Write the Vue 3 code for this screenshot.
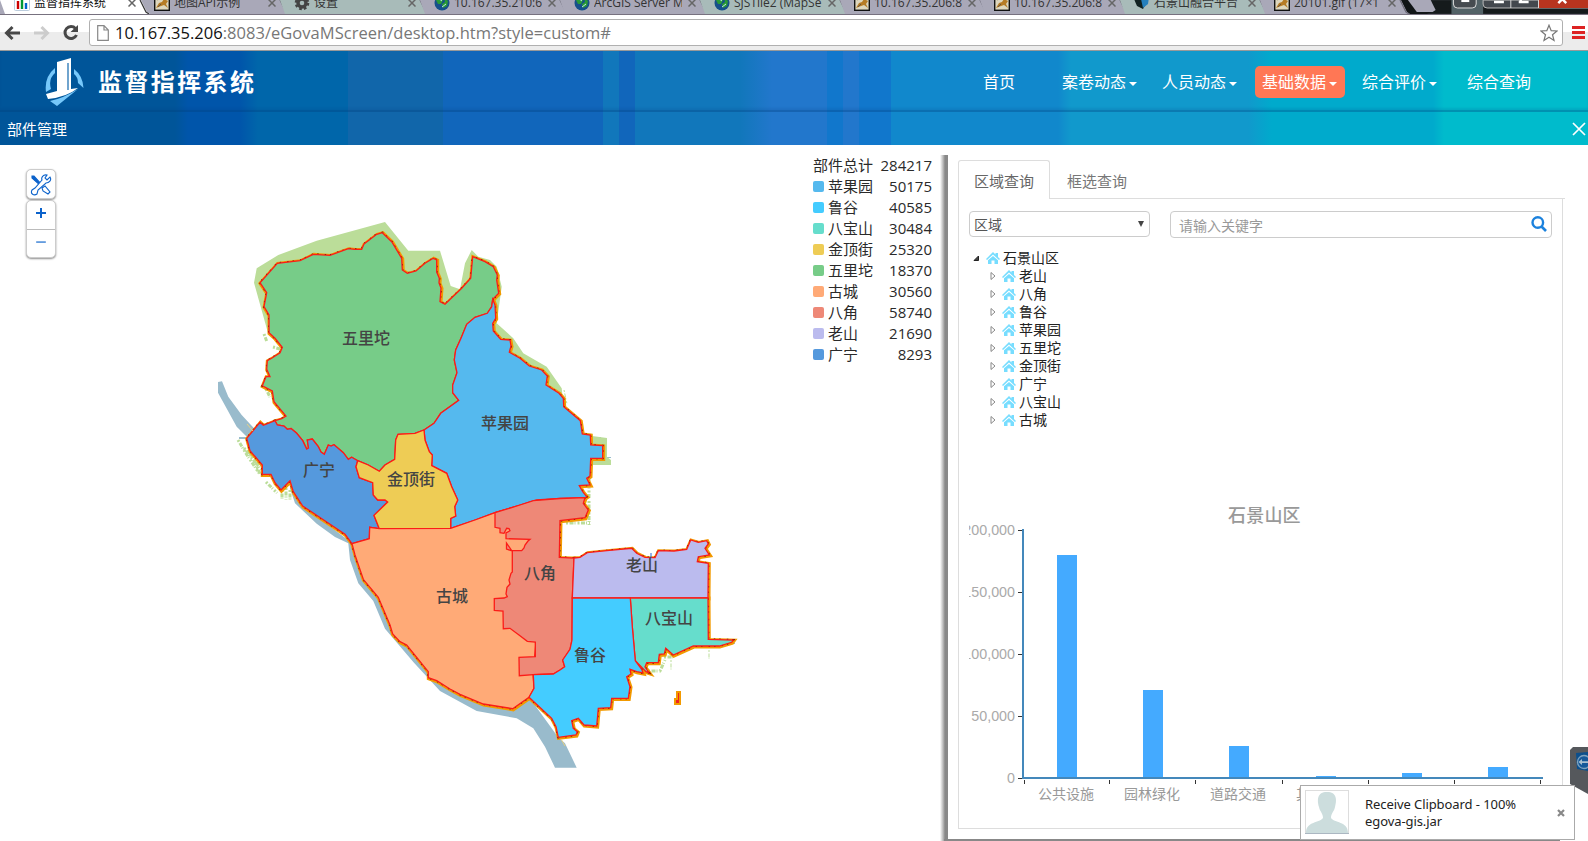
<script setup>
const tabs = [
  { title: '监督指挥系统', icon: 'chart', active: true },
  { title: '地图API示例', icon: 'map' },
  { title: '设置', icon: 'gear' },
  { title: '10.167.35.210:6', icon: 'globe' },
  { title: 'ArcGIS Server M', icon: 'globe' },
  { title: 'SJSTile2 (MapSe', icon: 'globe' },
  { title: '10.167.35.206:8', icon: 'map' },
  { title: '10.167.35.206:8', icon: 'map' },
  { title: '石景山融合平台', icon: 'cube' },
  { title: '20101.gif (17×1', icon: 'map' },
]

const nav = [
  { text: '首页', cls: 'n-home' },
  { text: '案卷动态', caret: true, cls: 'n-case' },
  { text: '人员动态', caret: true, cls: 'n-staff' },
  { text: '基础数据', caret: true, cls: 'n-base active' },
  { text: '综合评价', caret: true, cls: 'n-eval' },
  { text: '综合查询', cls: 'n-query' },
]

const legend = [
  { name: '苹果园', value: 50175, color: '#55b9ee' },
  { name: '鲁谷', value: 40585, color: '#44ccff' },
  { name: '八宝山', value: 30484, color: '#66ddcc' },
  { name: '金顶街', value: 25320, color: '#eecc55' },
  { name: '五里坨', value: 18370, color: '#77cc88' },
  { name: '古城', value: 30560, color: '#ffaa77' },
  { name: '八角', value: 58740, color: '#ee8877' },
  { name: '老山', value: 21690, color: '#bbbbee' },
  { name: '广宁', value: 8293, color: '#5599dd' },
]

const bajiaoWest = '519.3,675.7 519,657.3 535.3,656.7 535.3,642 527.3,641.3 519,635 510,628.3 503.3,628.7 503,611 494.3,610.3 494.3,598.7 504,598 507.3,596.7 506,594 507,587.3 510,584 509,580 511,573.3 512.3,572 512.3,550.7 521.7,550.7 524,548 525,545 528,541 530,539.3 506,538.7 506,533 510,530.7 509,528.5 506.7,528.3 504,533.3 500,532.7 500,528.3 495,527.3 495,512.7'
const bajiaoEast = '572.3,598 572,640 570,649.3 562.7,660 564.7,666.7 560,670 553.3,674 533.3,674.7'

const regions = [
  { name: '五里坨', color: '#77cc88', x: 366, y: 338, points: '260,282.7 266.7,292.7 264,306.7 269,315 269,332.7 275,338.3 282.3,347.3 280,352.7 272,358 267.3,360.7 266.7,369.3 270,376.7 266,376.7 262.3,385.7 272.3,391 274,401.7 286,416 281.7,418.7 275,420.7 277.3,425 284,426 287.3,429.3 291,428.5 296.7,433.3 302.7,440.7 306.7,449 308.5,448 307.3,440 312.3,439 318.3,446.7 321,452 324.3,454.3 328.3,445 331,446 334,444.7 343.3,452.7 348.3,459.3 351.7,457.3 357.7,460.7 368.3,465 379.3,471.3 385,465 394.7,459.3 395.7,440 398,434.3 415,433.3 424,430 434,423.3 440.7,413.3 458.7,400.3 452.7,392.7 452.7,385 457,372.7 454.3,360 455.7,350 461,338.3 466.7,324.3 475,317.3 487.3,313.3 491.7,306.7 492.7,299.3 498.7,293.3 496.7,280 497.3,275 493.3,266.7 485,261.7 472.7,256.7 470.7,278.3 461.7,288.3 445,304.3 440,301.7 441,288 439,283 439.3,278.3 436.7,272 436.7,260 433.3,258.3 425,263.3 416,271 407.3,273.3 402.3,270 401.7,258.3 391.7,241.7 382.3,232.7 376.7,234.3 364,244 361.7,249.3 355,249.3 348.3,248.7 330,255.3 313.3,254.3 300,260.7 277.3,263.3' },
  { name: '苹果园', color: '#55b9ee', x: 505, y: 423.5, points: '492.7,299.3 495,305 495.7,318.3 492.7,323.3 493.3,331 500.7,339.3 510,340 511,346 509.3,352.3 520,358.3 529.3,366 541.7,370 547.3,376 546,385 559,393.3 563.3,398.3 563.7,406.7 580.3,420.7 582.3,434 590.3,435 590.7,445 602.7,445.7 602.7,458.3 590.7,458.3 590,476 586.7,478.3 590,485 579.3,485.7 582.7,491.7 586.7,496.7 585,497.7 560,498.5 536.7,500 520,505 495,512.7 475,520 450.7,528.3 450.7,518.3 455.7,516 454.7,506.7 457.7,500 451.7,486.7 446.7,473.3 431.7,465.7 432.3,455 429.3,451.7 425,440 424,430 434,423.3 440.7,413.3 458.7,400.3 452.7,392.7 452.7,385 457,372.7 454.3,360 455.7,350 461,338.3 466.7,324.3 475,317.3 487.3,313.3 491.7,306.7' },
  { name: '广宁', color: '#5599dd', x: 319, y: 470, points: '275,420.7 263.3,425.3 260,422.3 246.7,438.3 250,450.7 262.3,465 262.3,474.3 271,474.3 275,482.7 281,490 290,480.7 293.3,491.7 302.7,506 345,534.3 352,543.7 369.3,538.7 369.7,527.3 379.3,528.7 374,515.3 387.7,502 385,500 377.7,500 373.3,495 372.7,482.7 359.3,477.7 356,466.7 357.7,460.7 351.7,457.3 348.3,459.3 343.3,452.7 334,444.7 331,446 328.3,445 324.3,454.3 321,452 318.3,446.7 312.3,439 307.3,440 308.5,448 306.7,449 302.7,440.7 296.7,433.3 291,428.5 287.3,429.3 284,426 277.3,425' },
  { name: '金顶街', color: '#eecc55', x: 411, y: 479.5, points: '357.7,460.7 368.3,465 379.3,471.3 385,465 394.7,459.3 395.7,440 398,434.3 415,433.3 424,430 425,440 429.3,451.7 432.3,455 431.7,465.7 446.7,473.3 451.7,486.7 457.7,500 454.7,506.7 455.7,516 450.7,518.3 450.7,528.3 379.3,528.7 374,515.3 387.7,502 385,500 377.7,500 373.3,495 372.7,482.7 359.3,477.7 356,466.7' },
  { name: '古城', color: '#ffaa77', x: 452, y: 596, points: `352,543.7 369.3,538.7 369.7,527.3 379.3,528.7 450.7,528.3 475,520 495,512.7 533,502 540,600 533,674 534,688.3 529,697.3 512.7,708.7 483.3,704 460,694.3 450,689 436.7,680.7 428.3,677.7 428.3,671.7 406.7,645 400,641.7 392.7,634 390,625 378.3,597.3 363.3,579.3 355,555` },
  { name: '八角', color: '#ee8877', x: 540, y: 573, points: `495,512.7 520,505 533.3,500.7 560,498.5 585,497.7 583.3,503.3 588.3,510 585,517.7 560,520.7 559.3,557.3 574,558 ${bajiaoEast} ${bajiaoWest}` },
  { name: '老山', color: '#bbbbee', x: 642, y: 565, points: '574,558 580,557.3 587.3,552.7 606.7,550.7 631.7,548.3 636.7,553.3 645,557.3 655,557.7 658.3,550.7 674,551 686.7,549.3 690.7,540 698.3,542.3 706.7,540.7 708.3,544 705,548.3 709.3,555 698.3,556.7 697.3,561.7 708.3,563.3 708,598 572.3,598' },
  { name: '八宝山', color: '#66ddcc', x: 669, y: 618, points: '630.3,598 708,598 708.3,639.3 733.3,640 731.7,642.3 719.3,646 693.3,646 673.3,655 665.7,648.3 664.3,654 659.3,654.3 658.3,662.7 646.7,662.7 645,667 649,672.7 646,671.7 635.3,660.7 632.3,626.7' },
  { name: '鲁谷', color: '#44ccff', x: 590, y: 655, points: '630.3,598 632.3,626.7 635.3,660.7 641.7,669.3 643,673 636.7,671.7 630,669.3 631,674 626.7,676.7 630,686.7 628.3,698.3 611.7,698.3 610.7,707.7 598.3,708.3 596.7,726 584,725 578.3,718.3 571.7,720.7 573.3,728.3 577.3,731.7 576,735 558.3,737.3 556,726.7 551.7,718.3 529,697.3 534,688.3 533.3,674.7 553.3,674 560,670 564.7,666.7 562.7,660 570,649.3 572,640 572.3,598' },
]

const tree = ['老山', '八角', '鲁谷', '苹果园', '五里坨', '金顶街', '广宁', '八宝山', '古城']

const yTicks = ['200,000', '150,000', '100,000', '50,000', '0']
const bars = [
  { label: '公共设施', h: 222 },
  { label: '园林绿化', h: 87 },
  { label: '道路交通', h: 31 },
  { label: '其他设施', h: 1 },
  { label: '', h: 4 },
  { label: '', h: 10 },
]
</script>

<template>
  <div class="screen">
    <div class="tabstrip">
      <div v-for="(t, i) in tabs" :key="i" class="tab" :class="{ on: t.active, odd: i % 3 === 2 }">
        <svg class="tab-shape" viewBox="0 0 150 14" preserveAspectRatio="none">
          <path d="M0 0H141L147 12L150 14H5Z" class="shape" />
          <path d="M140 0L146 12L149 14" class="edge" />
        </svg>
        <svg class="fav" viewBox="0 0 16 16">
          <g v-if="t.icon === 'chart'"><rect x=".5" y="0" width="15" height="15.5" rx="1" fill="#fff" stroke="#bcd" /><path d="M4 6v8" stroke="#c00" stroke-width="2.4" /><path d="M8 3v11" stroke="#093" stroke-width="2.4" /><path d="M12 8v6" stroke="#06c" stroke-width="2.4" /></g>
          <g v-else-if="t.icon === 'map'"><rect x=".7" y=".7" width="14.6" height="14.6" fill="#ddd6bd" stroke="#111" stroke-width="1.4" /><path d="M2 13L5 8L8 7L10 4L14 6L12 9L14 13L10 10L7 11Z" fill="#b57b25" /><path d="M3 5L6 3M4 12L7 9" stroke="#654" /></g>
          <g v-else-if="t.icon === 'gear'"><circle cx="8" cy="8" r="4" fill="none" stroke="#444" stroke-width="3.4" /><circle cx="8" cy="8" r="6" fill="none" stroke="#444" stroke-width="2.6" stroke-dasharray="2.6 2.1" /></g>
          <g v-else-if="t.icon === 'globe'"><circle cx="8" cy="8" r="7.5" fill="#15508a" /><path d="M2 5L7 2L9 5L7 9L4 9ZM10 3L14 6L13 11L9 13L8 9L11 7Z" fill="#299a35" /><path d="M4 3L8 6M8 12L12 9" stroke="#bfe6ea" /></g>
          <g v-else><path d="M0 4L8 0L14 5L9 14L3 11Z" fill="#122" /><path d="M7 4L15 2L14 9L9 13Z" fill="#2580bd" /></g>
        </svg>
        <span class="tab-title">{{ t.title }}</span>
        <svg class="tab-x" viewBox="0 0 8 8"><path d="M.5 .5L7.500 7.500M7.500 .5L.5 7.500" /></svg>
      </div>
      <svg class="caption" viewBox="0 0 190 14">
        <rect width="190" height="14" fill="#151a1c" />
        <path d="M0 0H22L31 12L27 14H0Z" fill="#101416" />
        <path d="M8 0H31L36 10L33 12H17Z" fill="#a9a8b8" />
        <rect x="52" y="0" width="32" height="14" fill="#6d8288" opacity=".7" />
        <rect x="54" y="-8" width="23" height="16" rx="4" fill="#464b50" stroke="#ddd" />
        <rect x="62" y="-2" width="8" height="4" fill="#fff" />
        <path d="M84 0V4Q84 8 88 8H190V0Z" fill="#43484e" stroke="#bbb" />
        <path d="M140 0H190V8H140Z" fill="#b8341f" /><path d="M112 0V8M140 0V8" stroke="#ddd" />
        <path d="M95 2H105M120 2H130M122 0V2" stroke="#fff" stroke-width="2.500" />
        <path d="M160 3L164 -1L168 3" fill="none" stroke="#fff" stroke-width="2.500" />
      </svg>
    </div>

    <div class="toolbar">
      <svg class="tools" viewBox="0 0 88 36">
        <g fill="none" stroke-width="3"><path d="M20 18H7M12.500 12L6.500 18L12.500 24" stroke="#484848" /><path d="M34 18H47M41.500 12L47.500 18L41.500 24" stroke="#ccc" /><path d="M75.500 13.500A6 6 0 1 0 76.500 20" stroke="#484848" /></g>
        <path d="M78 10V17H70.500Z" fill="#484848" />
      </svg>
      <div class="url">
        <svg class="page" viewBox="0 0 12 16"><path d="M.7 .7H7L11.300 5V15.300H.7Z M7 .7V5H11.300" fill="#fff" stroke="#888" stroke-width="1.200" /></svg>
        <span class="addr"><b>10.167.35.206</b>:8083/eGovaMScreen/desktop.htm?style=custom#</span>
        <svg class="star" viewBox="0 0 18 18"><path d="M9 1.200L11.200 6.700L17 7L12.500 10.700L14 16.500L9 13.200L4 16.500L5.500 10.700L1 7L6.800 6.700Z" fill="#fff" stroke="#777" stroke-width="1.200" /></svg>
      </div>
      <div class="burger"><i></i><i></i><i></i></div>
    </div>

    <header class="header">
      <div class="top">
        <svg class="logo" viewBox="0 0 40 48">
          <path d="M10 10Q-1 19 1 34L6 31Q3 21 10 15Z" fill="#77c8fa" />
          <path d="M29 11Q38 18 38.500 30L33 25Q33 19 29 16Z" fill="#77c8fa" />
          <path d="M12 4L26 0V31L33 30Q22 39 3 41L1 36L12 33Z" fill="#fff" />
          <path d="M23 5V32" stroke="#1168ad" stroke-width="1.200" /><path d="M33 31L12 48L5 43Q19 40 33 31Z" fill="#77c8fa" />
        </svg>
        <h1>监督指挥系统</h1>
        <nav>
          <a v-for="n in nav" :key="n.text" :class="n.cls">{{ n.text }}<i v-if="n.caret" class="caret"></i></a>
        </nav>
      </div>
      <div class="sub">
        <span>部件管理</span>
        <svg viewBox="0 0 14 14"><path d="M1 1L13 13M13 1L1 13" stroke="#fff" stroke-width="1.700" /></svg>
      </div>
    </header>

    <main class="body">
      <section class="map">
        <svg class="canvas" viewBox="0 145 940 696">
          <g fill="#99bbcc">
            <path d="M218 382L222 381.300L228.300 396.700L241.700 415L254 428.300L258 430L248 438L245 435L236.700 426.700L218 392.700ZM239 437H247V439H239Z" />
            <path d="M290 481L290 488.300L295 503.300L316.700 523.700L335 537L348.300 543.300L350 560L358.300 583.300L373.300 601L385 628.700L413.300 662L440 691L476.700 711L516.700 718.300L533.300 728.300L545 746.700L555 767.700H576.700L565 743.300L558 737L529 697L428 672L352 543L303 506Z" />
            <path d="M604 457h7v1h-7zM604 460h7v1h-7zM596 437h5v1h-5zM726 643h9v1h-9z" />
          </g>
          <path fill="#bbdd99" d="M268 333L254 282.700L256.700 268.300L278.300 255L316.700 240.700L385 222L408.300 250.700H440L450.700 286L460 289.300L465 263.300L471.700 250L478.300 256.700L490 260L496.700 266.700L501.700 286.700L496.700 323.300L513.300 338.300L523.300 353.300L546.700 366.700L561.700 388.300L563 400L500 400L350 350ZM592 436L607 438V457L611 460V465H593Z" />
          <g fill="none" stroke="#bbdd99" stroke-width="3" stroke-dasharray="2 1.500 4 1 1 2">
            <path d="M264 334L267 342M273 347L280 349M266 389L270 397M238 440L247 455L259 473M244 448L255 462L260 474M248 450L261 470M266 482L277 493M282 490V499M286 488V500M290 490V501" />
            <path d="M589 479V498M589 501V525M566 523H590M648 671H660L665 660M664 657H673" />
            <path d="M709 650V659M671 660V670M564 390L567 404" stroke-width="1" />
          </g>
          <g transform="translate(.5 .6)" fill="none" stroke="#f29a00" stroke-width="4">
            <polygon v-for="r in regions" :key="r.name" :points="r.points" />
          </g>
          <g fill="none" stroke="#501010" stroke-width="2" stroke-dasharray="1.500 6 1.500 4">
            <polygon v-for="r in regions" :key="r.name" :points="r.points" />
          </g>
          <g stroke="#fb1c18" stroke-width="1.300">
            <polygon v-for="r in regions" :key="r.name" :points="r.points" :fill="r.color" />
            <path d="M512 551L506.500 543V549L512 551" fill="#ee8877" />
          </g>
          <path d="M677 692H680V704H675V699H677Z" fill="#e22" stroke="#f29a00" stroke-width="2" />
          <path d="M651 553V558" stroke="#2266dd" />
          <path d="M247 424L253 431M561 739L565 746" stroke="#e7d080" />
          <text v-for="r in regions" :key="r.name" class="label" :x="r.x" :y="r.y + 5.800" text-anchor="middle">{{ r.name }}</text>
        </svg>

        <div class="controls">
          <div class="ctl">
            <svg viewBox="0 0 22 22" fill="#fff" stroke="#0b62cb" stroke-width="1.100"><path d="M2 2L4 2L12 11L11 12L2 4Z" fill="#0b62cb" /><path d="M12 14L15 12L20 18L18 20L13 17Z" /><path d="M2 16C0 20 4 22 7 20L8 16L16 9C19 9 22 6 20 3L17 6L15 4L17 1C13 0 11 4 12 6L5 14Z" /></svg>
          </div>
          <div class="zoomer">
            <svg viewBox="0 0 28 28"><path d="M9 12H19M14 7V17" stroke="#0b62cb" stroke-width="2" /></svg>
            <svg viewBox="0 0 28 28"><path d="M9 12.500H19" stroke="#0b62cb" stroke-width="1.200" /></svg>
          </div>
        </div>

        <div class="legend">
          <div class="lrow"><span>部件总计</span><em>284217</em></div>
          <div v-for="l in legend" :key="l.name" class="lrow">
            <i :style="{ background: l.color }"></i><span>{{ l.name }}</span><em>{{ l.value }}</em>
          </div>
        </div>
      </section>

      <aside class="panel">
        <div class="ptabs">
          <div class="ptab current">区域查询</div>
          <div class="ptab">框选查询</div>
        </div>
        <div class="pbody">
          <div class="filters">
            <div class="select"><span>区域</span><i></i></div>
            <div class="search">
              <span>请输入关键字</span>
              <svg viewBox="0 0 16 16"><circle cx="6.800" cy="6.500" r="5.300" fill="none" stroke="#1c82dd" stroke-width="2.400" /><path d="M10.500 10.500L15 15" stroke="#1c82dd" stroke-width="2.600" /></svg>
            </div>
          </div>
          <div class="tree">
            <div class="node root">
              <svg class="arrow" viewBox="0 0 7 7"><path d="M5.500 1.500V6H1Z" fill="#444" stroke="#222" /></svg>
              <svg class="house" viewBox="0 0 14 12"><path d="M7 0L9.500 2.400V1H12V5L14 7L13 8L7 2.600L1 8L0 7Z" /><path d="M7 4L12 8.300V12H8.500V8.500H5.500V12H2V8.300Z" /></svg>
              <span>石景山区</span>
            </div>
            <div v-for="t in tree" :key="t" class="node">
              <svg class="arrow" viewBox="0 0 7 8"><path d="M2 .5L6 4L2 7.500Z" fill="#fff" stroke="#888" /></svg>
              <svg class="house" viewBox="0 0 14 12"><path d="M7 0L9.500 2.400V1H12V5L14 7L13 8L7 2.600L1 8L0 7Z" /><path d="M7 4L12 8.300V12H8.500V8.500H5.500V12H2V8.300Z" /></svg>
              <span>{{ t }}</span>
            </div>
          </div>
          <div class="chart">
            <h2>石景山区</h2>
            <div class="plot">
              <div class="ylabels"><span v-for="y in yTicks" :key="y">{{ y }}<b></b></span></div>
              <div class="bars">
                <div v-for="(b, i) in bars" :key="i" class="slot"><i :style="{ height: b.h + 'px' }"></i></div>
              </div>
            </div>
            <div class="xlabels"><span v-for="(b, i) in bars" :key="i">{{ b.label }}</span></div>
          </div>
        </div>
      </aside>
    </main>

    <svg class="viewer" viewBox="0 0 18 47">
      <path d="M3 0H18V47L0 37V3Z" fill="#55585c" /><path d="M6 6L18 5V24L7 22Z" fill="#0c4f8c" /><circle cx="14" cy="15" r="6.500" fill="#16599a" stroke="#7fa3bf" stroke-width="1.300" /><path d="M8.500 15L12 12V14.200H18V16H12V18Z" fill="#a9c0d0" />
    </svg>
    <div class="toast">
      <svg class="avatar" viewBox="0 0 44 44"><rect x=".5" y=".5" width="43" height="43" fill="#fff" stroke="#ddd" /><path d="M22 2C12 2 12 10 14 17C15 22 18 23 18 28C15 33 1 31 1 43H43C43 31 29 33 26 28C26 23 29 22 30 17C32 10 32 2 22 2Z" fill="#ccdddd" /><path d="M0 43.500H44" stroke="#abb7c2" /></svg>
      <div class="msg">Receive Clipboard - 100%<br />egova-gis.jar</div>
      <svg class="tx" viewBox="0 0 8 8"><path d="M1 1L7 7M7 1L1 7" stroke="#888" stroke-width="2.200" /></svg>
    </div>
  </div>
</template>

<style>
body { margin: 0; overflow: hidden; }
</style>

<style scoped>
* { box-sizing: border-box; }
.screen { position: relative; width: 1588px; height: 841px; overflow: hidden; background: #fff; font-family: "Open Sans", "Noto Sans CJK SC", sans-serif; display: flex; flex-direction: column; }
svg { display: block; flex: none; }
i, em { font-style: normal; }

.tabstrip { display: flex; height: 15px; background: #a9a8b8; border-bottom: 1px solid #77717f; overflow: hidden; flex: none; }
.tab { position: relative; flex: none; width: 140px; height: 14px; padding-left: 14px; display: flex; }
.tab-shape { position: absolute; left: 0; top: 0; width: 150px; height: 14px; }
.shape { fill: #a9a8b8; }
.odd .shape { fill: #a8bbb9; }
.on .shape { fill: #fff; }
.edge { fill: none; stroke: #6c6a78; stroke-width: 1.2; }
.on { z-index: 2; }
.on .edge { stroke: #333; }
.fav { position: relative; width: 16px; height: 16px; margin-top: -5px; }
.tab-title { position: relative; width: 88px; margin-left: 4px; margin-top: -6px; font-size: 12px; line-height: 18px; height: 18px; color: #333; white-space: nowrap; overflow: hidden; }
.on .tab-title { color: #111; }
.tab-x { position: relative; width: 8px; height: 8px; margin: -1px 0 0 6px; fill: none; stroke: #666; stroke-width: 1.5; }
.caption { width: 188px; height: 14px; }

.toolbar { display: flex; height: 36px; background: linear-gradient(#fff 0 17px, #ececec 17px); border-bottom: 1px solid #999; flex: none; }
.tools { width: 88px; height: 36px; }
.url { display: flex; align-items: center; margin: 4px 0 0 1px; width: 1474px; height: 27px; border: 1px solid #b0b0b0; border-radius: 3px; background: #fff; padding-left: 7px; }
.page { width: 12px; height: 16px; }
.addr { margin-left: 6px; font-size: 16.5px; color: #777; flex: 1; white-space: nowrap; letter-spacing: 0.03px; }
.addr b { font-weight: 400; color: #111; }
.star { width: 18px; height: 18px; margin-right: 4px; }
.burger { margin: 11px 0 0 9px; width: 13px; display: flex; flex-direction: column; gap: 2px; }
.burger i { height: 3px; background: #dd2222; }

.header { height: 94px; flex: none; color: #fff; background: linear-gradient(90deg, #005599 0 175px, #0055aa 188px 240px, #0066aa 258px 348px, #1166aa 348px 443px, #1166bb 443px 603px, #1177bb 603px 619px, #1166bb 619px 635px, #1177bb 635px 740px, #2277cc 772px 827px, #1177cc 827px 843px, #2277cc 843px 859px, #1177cc 859px 891px, #1188cc 891px 1058px, #1199cc 1071px 1248px, #00aacc 1272px 1433px, #00bbcc 1444px); }
.top { display: flex; height: 61px; border-bottom: 2px solid rgba(0, 60, 120, .33); box-shadow: inset 0 -2px 2px rgba(0, 60, 120, .12); }
.logo { width: 40px; height: 48px; margin: 7px 0 0 45px; }
h1 { margin: 12px 0 0 13px; width: 172px; font-size: 24px; line-height: 38px; font-weight: 700; letter-spacing: 2.4px; white-space: nowrap; }
nav { display: flex; align-items: flex-start; padding-top: 15px; margin-left: 713px; }
nav a { display: flex; align-items: center; justify-content: flex-start; height: 32px; font-size: 16px; line-height: 30px; white-space: nowrap; flex: none; }
.n-home { width: 79px; }
.n-case { width: 100px; }
.n-staff { width: 93px; }
nav .active { width: 90px; padding-left: 7px; background: #ff7755; border-radius: 5px; margin-right: 17px; }
.n-eval { width: 105px; }
.caret { width: 0; height: 0; border: 4px solid transparent; border-top-color: #fff; border-bottom: 0; margin: 3px 0 0 3px; }
.sub { display: flex; align-items: center; height: 33px; padding: 3px 2px 0 7px; justify-content: space-between; font-size: 15px; line-height: 20px; }
.sub span { margin-top: -2px; }
.sub svg { width: 14px; height: 14px; margin-top: -2px; }

.body { display: flex; height: 696px; }
.map { position: relative; width: 940px; height: 696px; flex: none; }
.canvas { width: 940px; height: 696px; }
.label { font-size: 16px; font-weight: 500; fill: #444; font-family: "Noto Sans CJK SC", sans-serif; }
.controls { position: absolute; left: 26px; top: 24px; display: flex; flex-direction: column; gap: 1px; }
.ctl, .zoomer { width: 30px; border: 1px solid #ccc; border-radius: 5px; background: #fff; box-shadow: 0 1px 2px rgba(0, 0, 0, .45); }
.ctl { height: 30px; padding: 4px 3px; }
.ctl svg { width: 22px; height: 22px; }
.zoomer { height: 58px; }
.zoomer svg { width: 28px; height: 28px; }
.zoomer svg + svg { border-top: 1px solid #bbb; }
.legend { position: absolute; left: 813px; top: 10px; width: 119px; }
.lrow { display: flex; align-items: center; height: 21px; font-size: 15px; line-height: 21px; color: #2a2a2a; }
.lrow i { width: 11px; height: 11px; border-radius: 2px; margin-right: 4px; }
.lrow em { margin-left: auto; }

.panel { width: 642px; flex: none; height: 688px; margin-top: 8px; padding: 7px 0 0 18px; background: linear-gradient(#888, #888) 4px 100% / 616px 2px no-repeat, linear-gradient(90deg, #fff, #bbb 3px, #888 5px, #888 8px) 0 2px / 8px 100% no-repeat; }
.ptabs { display: flex; width: 607px; height: 39px; border-bottom: 1px solid #ddd; font-size: 15px; color: #777; }
.ptab { width: 110px; height: 38px; line-height: 43px; padding-left: 17px; }
.ptab.current { width: 92px; height: 39px; line-height: 41px; border: 1px solid #ddd; border-bottom: 0; border-radius: 3px 3px 0 0; padding-left: 15px; background: #fff; color: #666; }
.pbody { width: 605px; height: 630px; border: 1px solid #ddd; border-top: 0; padding: 12px 10px 0 10px; overflow: hidden; }
.filters { display: flex; gap: 20px; }
.select, .search { display: flex; align-items: center; height: 26px; border: 1px solid #ccc; border-radius: 4px; font-size: 14px; }
.select { width: 181px; padding: 0 5px 0 4px; color: #555; justify-content: space-between; }
.select i { width: 0; height: 0; border: 3.5px solid transparent; border-top: 6px solid #444; border-bottom: 0; }
.search { width: 382px; height: 27px; padding: 0 4px 0 8px; color: #999; justify-content: space-between; }
.search svg { width: 16px; height: 16px; margin-top: -1px; }
.tree { margin-top: 11px; }
.node { display: flex; align-items: center; height: 18px; padding-left: 20px; font-size: 14px; line-height: 18px; color: #222; }
.node.root { padding-left: 4px; }
.arrow { width: 7px; height: 8px; }
.house { width: 14px; height: 12px; margin: 0 3px 0 6px; fill: #77ddff; }
.chart { margin-top: 74px; }
h2 { margin: 0 0 0 259px; font-size: 18px; line-height: 24px; font-weight: 500; color: #999; letter-spacing: .2px; }
.plot { display: flex; height: 250px; margin-top: 2px; }
.ylabels { width: 53px; height: 248px; display: flex; flex-direction: column; justify-content: space-between; clip-path: inset(-12px 0); margin-top: 1px; }
.ylabels span { position: relative; display: flex; justify-content: flex-end; align-items: center; height: 0; font: 14.3px/0 "Liberation Sans", sans-serif; color: #aaa; padding-right: 7px; }
.ylabels b { position: absolute; right: 0; width: 4px; height: 1px; background: #333; }
.bars { display: flex; width: 521px; height: 250px; border-left: 2px solid #4488bb; border-bottom: 2px solid #4488bb; position: relative; flex: none; padding-right: 2px; }
.slot { position: relative; flex: 1; height: 252px; padding-bottom: 4px; display: flex; align-items: flex-end; justify-content: center; }
.slot::after, .slot:first-child::before { content: ""; position: absolute; right: 0; bottom: -3px; width: 1px; height: 4px; background: #333; }
.slot:first-child::before { right: auto; left: 0; }
.slot i { width: 20px; background: #44aaff; }
.xlabels { display: flex; width: 516px; margin: 4px 0 0 54px; font: 14px/20px "Noto Sans CJK SC", sans-serif; color: #999; }
.xlabels span { flex: 1; text-align: center; }

.viewer { position: absolute; left: 1570px; top: 747px; width: 18px; height: 47px; }
.toast { position: absolute; left: 1300px; top: 785px; width: 275px; height: 55px; display: flex; background: #fff; border: 1px solid #aaa; padding: 4px; }
.avatar { width: 44px; height: 44px; }
.msg { margin: 6px 0 0 16px; width: 192px; font: 13px/17px "Noto Sans", sans-serif; letter-spacing: -.08px; color: #222; }
.tx { width: 8px; height: 8px; margin-top: 19px; }
</style>
